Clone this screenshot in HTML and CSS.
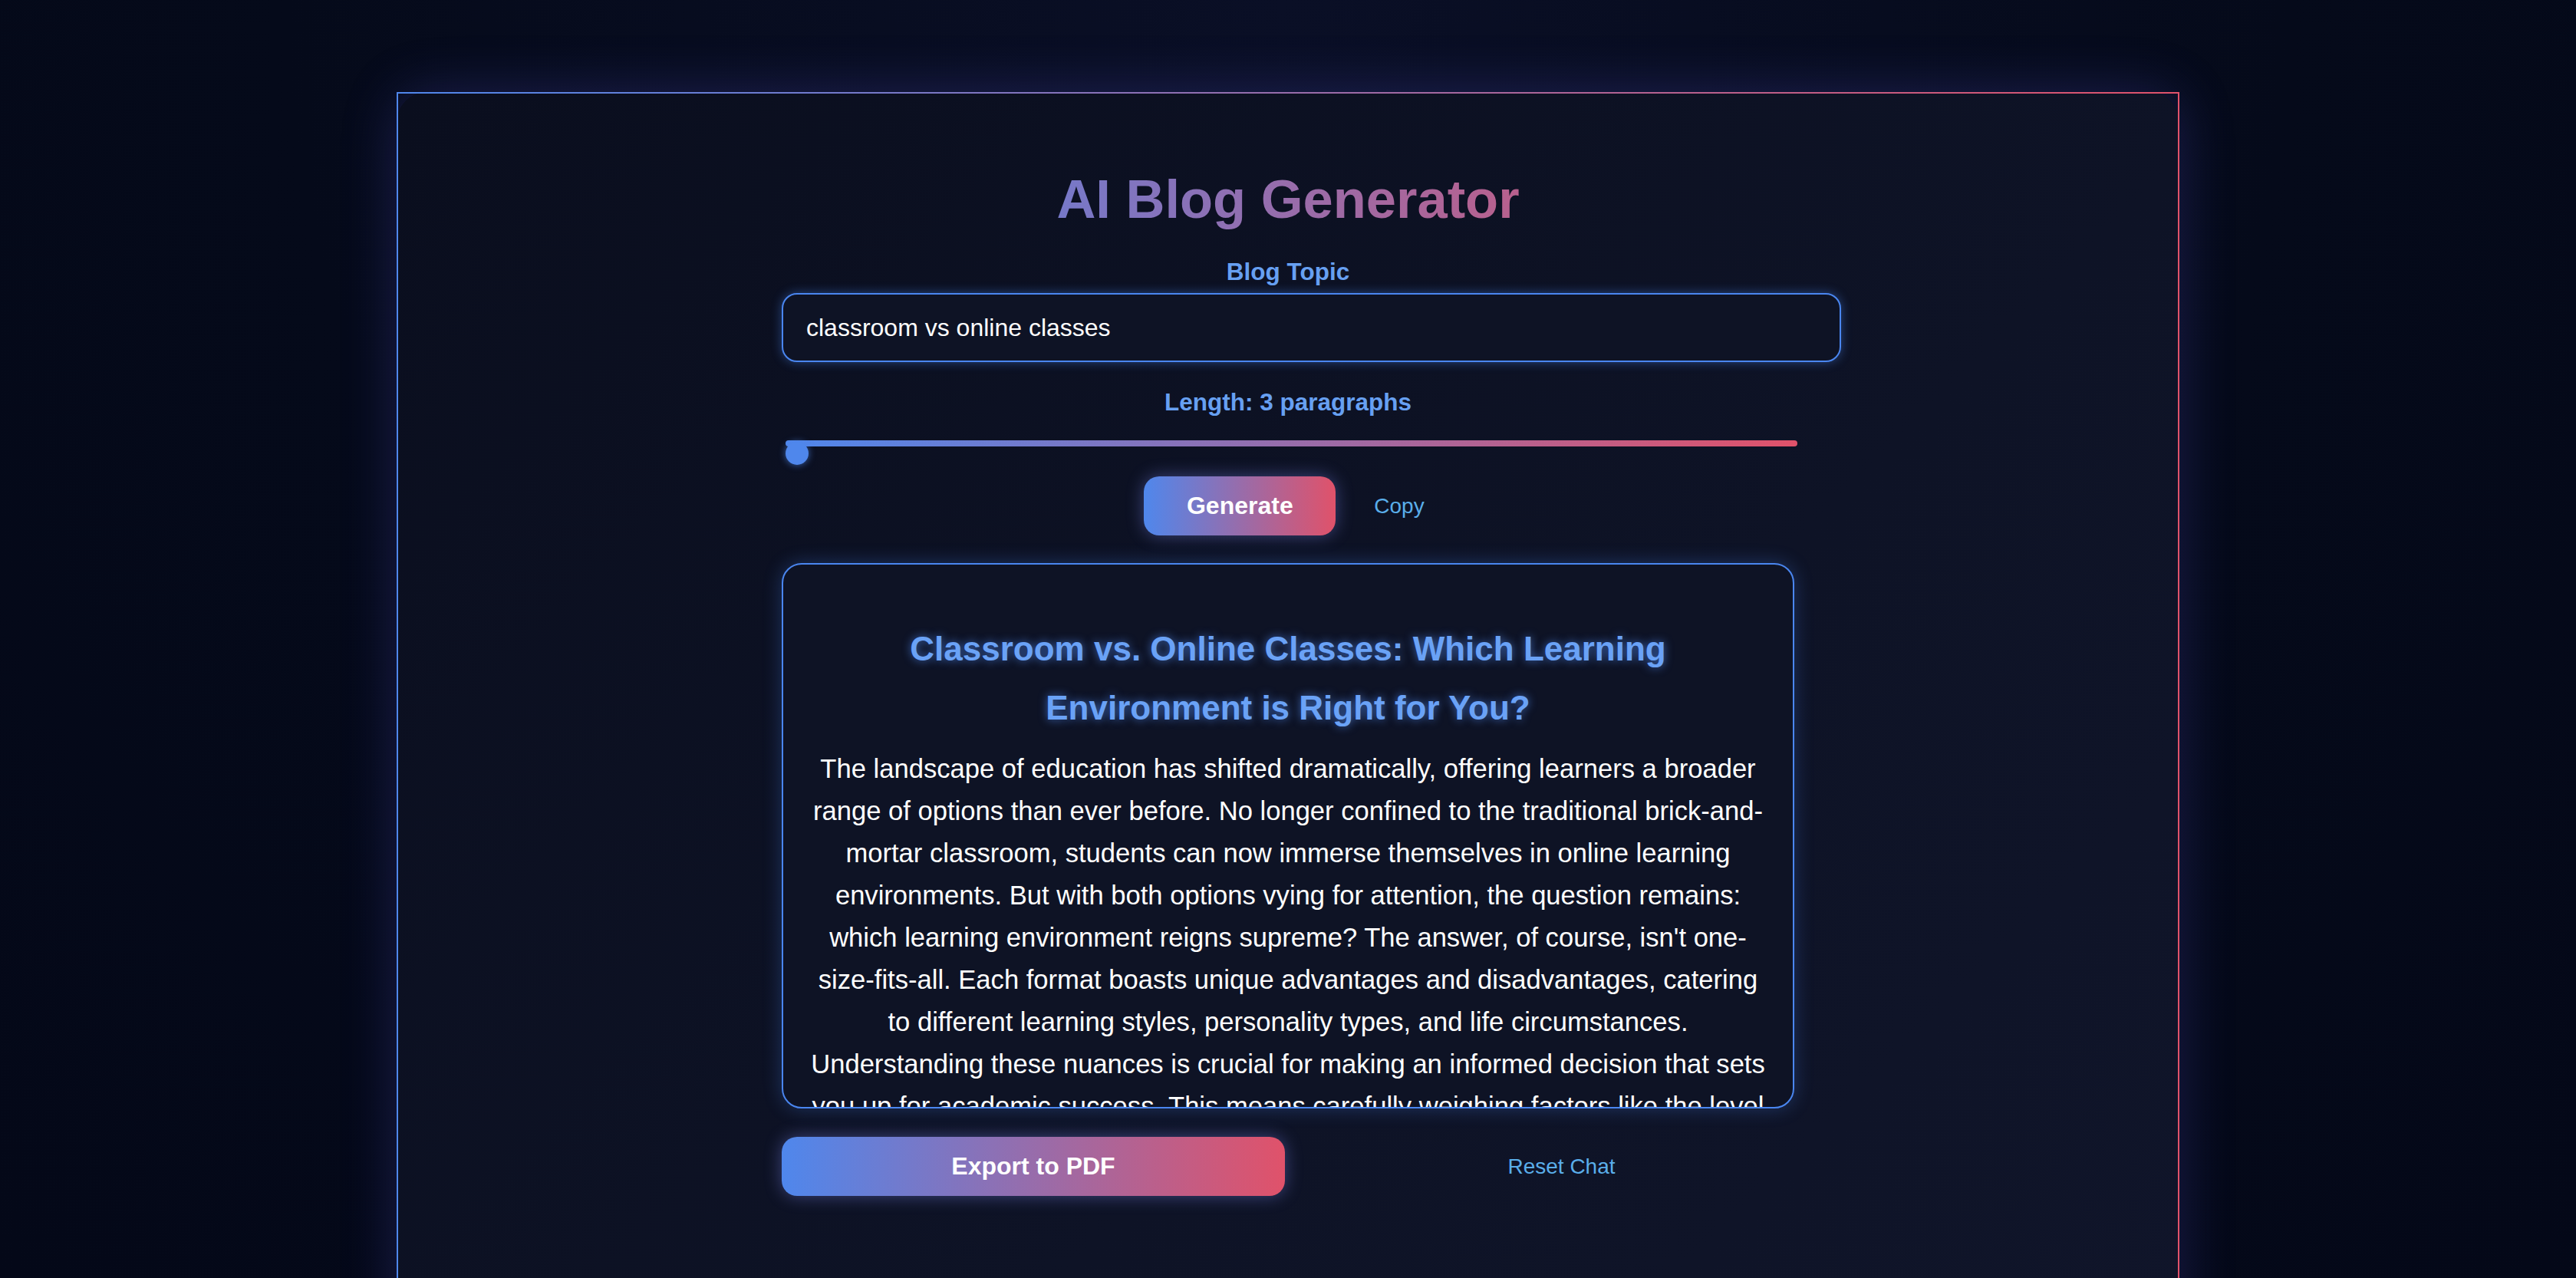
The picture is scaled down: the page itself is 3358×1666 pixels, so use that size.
FILE: index.html
```html
<!DOCTYPE html>
<html lang="en">
<head>
<meta charset="utf-8">
<title>AI Blog Generator</title>
<link rel="stylesheet" href="styles.css">
</head>
<body>
<div class="page">
  <main class="card">
    <div class="column">
      <h1 class="title">AI Blog Generator</h1>
      <label class="field-label topic-label" for="topic">Blog Topic</label>
      <input id="topic" class="topic-input" type="text" value="classroom vs online classes">
      <div class="field-label length-label">Length: 3 paragraphs</div>
      <div class="slider">
        <div class="slider-track"><span class="slider-thumb"></span></div>
      </div>
      <div class="actions">
        <button class="btn-primary generate">Generate</button>
        <button class="btn-link copy">Copy</button>
      </div>
      <article class="output">
        <h2 class="output-title">Classroom vs. Online Classes: Which Learning Environment is Right for You?</h2>
        <p class="output-text">The landscape of education has shifted dramatically, offering learners a broader range of options than ever before. No longer confined to the traditional brick-and-mortar classroom, students can now immerse themselves in online learning environments. But with both options vying for attention, the question remains: which learning environment reigns supreme? The answer, of course, isn't one-size-fits-all. Each format boasts unique advantages and disadvantages, catering to different learning styles, personality types, and life circumstances. Understanding these nuances is crucial for making an informed decision that sets you up for academic success. This means carefully weighing factors like the level of interaction you need, your ability to manage time independently, and the kind of support you expect from instructors and peers.</p>
        <p class="output-text">Traditional classrooms offer structure, face-to-face discussion and immediate feedback, while online classes provide flexibility, self-paced study and access to courses from anywhere in the world.</p>
      </article>
      <div class="bottom-actions">
        <button class="btn-primary export">Export to PDF</button>
        <button class="btn-link reset">Reset Chat</button>
      </div>
    </div>
  </main>
</div>
</body>
</html>
```

FILE: styles.css
```css
* { box-sizing: border-box; }

html, body {
  margin: 0;
  height: 100%;
}

body {
  background: radial-gradient(ellipse at 50% 0%, #0a0f26 0%, #050a1a 55%, #040818 100%);
  font-family: "Liberation Sans", Arial, Helvetica, sans-serif;
  color: #ffffff;
  overflow: hidden;
}

.page {
  display: flex;
  justify-content: center;
  padding-top: 120px;
}

.card {
  width: 2324px;
  min-height: 1700px;
  border: 2px solid;
  border-image: linear-gradient(90deg, #4f87ec, #e0526a) 1;
  border-radius: 40px;
  background: linear-gradient(135deg, #0a0e1e 0%, #0e1326 60%, #10152a 100%);
  box-shadow: 0 0 70px rgba(86, 84, 210, 0.28);
  padding-top: 98px;
  display: flex;
  justify-content: center;
}

.column {
  width: 1320px;
  display: flex;
  flex-direction: column;
}

.title {
  margin: 0;
  font-size: 70.5px;
  line-height: 80px;
  font-weight: 700;
  text-align: center;
  background: linear-gradient(90deg, #4f87ec, #e0526a);
  -webkit-background-clip: text;
  background-clip: text;
  color: transparent;
}

.field-label {
  display: block;
  font-size: 31.5px;
  line-height: 40px;
  font-weight: 700;
  color: #67a0f2;
  text-align: center;
}

.topic-label {
  margin-top: 34px;
}

.topic-input {
  margin-top: 8px;
  width: 1381px;
  height: 90px;
  padding: 0 30px;
  border: 2px solid #4a86f0;
  border-radius: 20px;
  background: #0e1325;
  color: #ffffff;
  font-family: "Liberation Sans", Arial, Helvetica, sans-serif;
  font-size: 32px;
  outline: none;
  box-shadow: 0 0 14px rgba(74, 134, 240, 0.45);
}

.length-label {
  margin-top: 32px;
}

.slider {
  margin-top: 30px;
  padding-left: 5px;
}

.slider-track {
  position: relative;
  width: 1319px;
  height: 8px;
  border-radius: 4px;
  background: linear-gradient(90deg, #4f87ec, #e0526a);
}

.slider-thumb {
  position: absolute;
  left: 0;
  top: 2px;
  width: 30px;
  height: 30px;
  border-radius: 50%;
  background: #4f87ec;
  box-shadow: 0 0 10px rgba(79, 135, 236, 0.7);
}

.actions {
  margin-top: 39px;
  display: flex;
  justify-content: center;
  align-items: center;
  gap: 30px;
}

.btn-primary {
  border: none;
  border-radius: 20px;
  height: 77px;
  background: linear-gradient(90deg, #4f87ec, #e0526a);
  color: #ffffff;
  font-family: "Liberation Sans", Arial, Helvetica, sans-serif;
  font-size: 32px;
  font-weight: 700;
  box-shadow: 0 0 22px rgba(120, 130, 230, 0.45);
  cursor: pointer;
}

.generate {
  width: 250px;
}

.btn-link {
  border: none;
  background: transparent;
  color: #5aaeea;
  font-family: "Liberation Sans", Arial, Helvetica, sans-serif;
  font-size: 28px;
  cursor: pointer;
}

.copy {
  padding: 0 10px 0 20px;
}

.output {
  margin-top: 36px;
  height: 711px;
  overflow: hidden;
  border: 2px solid #4a86f0;
  border-radius: 26px;
  background: #0e1325;
  box-shadow: 0 0 24px rgba(74, 134, 240, 0.3);
  padding: 35px 32px;
  text-align: center;
}

.output-title {
  margin: 36px 0 14px;
  font-size: 44px;
  line-height: 77px;
  font-weight: 700;
  color: #6aa2f6;
  text-shadow: 0 0 12px rgba(79, 135, 236, 0.75);
}

.output-text {
  margin: 0 0 20px;
  font-size: 34.6px;
  line-height: 55px;
  color: #ffffff;
}

.bottom-actions {
  margin-top: 37px;
  display: flex;
  align-items: center;
  gap: 57px;
}

.export {
  width: 656px;
  flex: 0 0 656px;
}

.reset {
  flex: 1;
  text-align: center;
  padding: 0;
}
```
